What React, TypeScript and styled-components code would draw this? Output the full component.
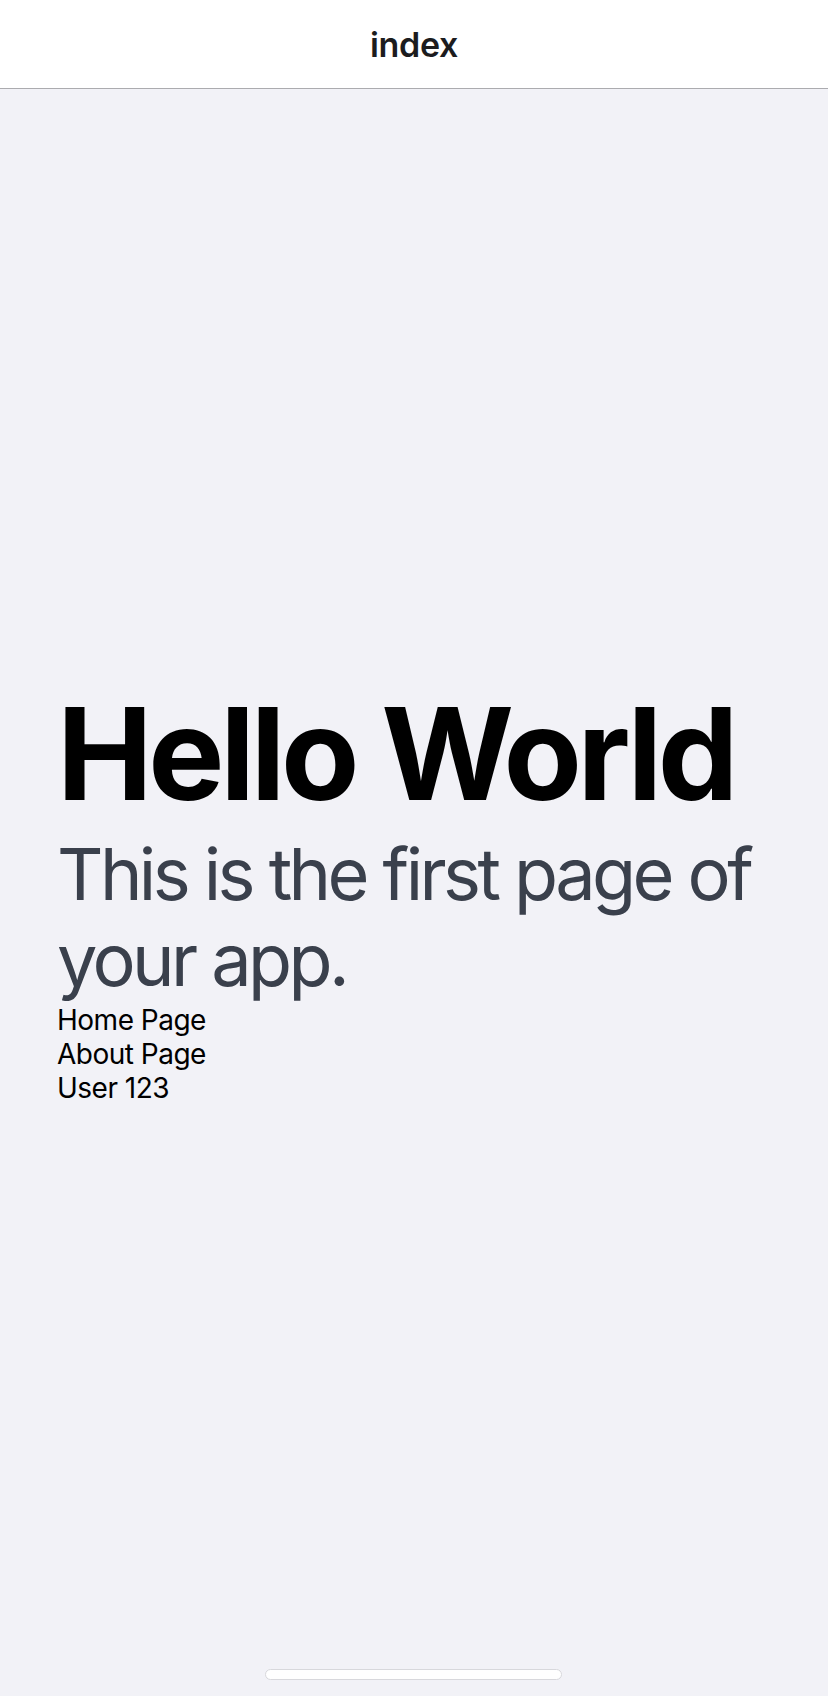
import React from "react";
import styled, { createGlobalStyle } from "styled-components";

const GlobalStyle = createGlobalStyle`
  html, body {
    margin: 0;
    padding: 0;
    background: #f2f2f7;
  }
  body {
    font-family: Inter, Roboto, "Liberation Sans", sans-serif;
    -webkit-font-smoothing: antialiased;
  }
  * { box-sizing: border-box; }
`;

const Screen = styled.div`
  width: 828px;
  height: 1696px;
  display: flex;
  flex-direction: column;
  background: #f2f2f7;
  overflow: hidden;
`;

const NavBar = styled.header`
  height: 89px;
  flex: 0 0 89px;
  background: #ffffff;
  border-bottom: 1px solid #ababaf;
  display: flex;
  align-items: center;
  justify-content: center;
`;

const NavTitle = styled.h1`
  margin: 0;
  font-size: 34px;
  font-weight: 600;
  color: #1c1c1e;
  letter-spacing: -0.3px;
`;

const Main = styled.main`
  flex: 1;
  display: flex;
  flex-direction: column;
  justify-content: center;
  padding: 0 36px 4px 57px;
  position: relative;
`;

const Title = styled.h2`
  margin: 0;
  font-size: 128px;
  font-weight: 700;
  color: #000000;
  letter-spacing: -4.3px;
  line-height: 155px;
`;

const Subtitle = styled.p`
  margin: 0;
  font-size: 72px;
  font-weight: 400;
  color: #3a404c;
  line-height: 86px;
  letter-spacing: -3.6px;
`;

const LinkList = styled.nav`
  display: flex;
  flex-direction: column;
`;

const LinkItem = styled.a`
  font-size: 28px;
  line-height: 34px;
  color: #000000;
  text-decoration: none;
  letter-spacing: -0.5px;
`;

const HomeIndicator = styled.div`
  position: absolute;
  left: 265px;
  bottom: 16px;
  width: 297px;
  height: 11px;
  border-radius: 6px;
  background: #ffffff;
  border: 1px solid #d8d8dc;
`;

export default function App() {
  return (
    <>
      <GlobalStyle />
      <Screen>
        <NavBar>
          <NavTitle>index</NavTitle>
        </NavBar>
        <Main>
          <Title>Hello World</Title>
          <Subtitle>This is the first page of your app.</Subtitle>
          <LinkList>
            <LinkItem href="#">Home Page</LinkItem>
            <LinkItem href="#">About Page</LinkItem>
            <LinkItem href="#">User 123</LinkItem>
          </LinkList>
          <HomeIndicator />
        </Main>
      </Screen>
    </>
  );
}
